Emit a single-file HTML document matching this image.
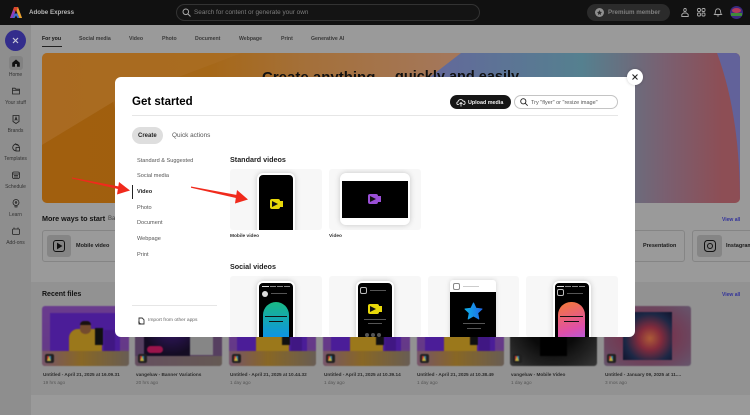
<!DOCTYPE html>
<html lang="en"><head><meta charset="utf-8"><title>Adobe Express</title>
<style>
*{box-sizing:border-box}
html,body{margin:0;padding:0;width:750px;height:415px;overflow:hidden;background:#9a9a9a}
body{font-family:"Liberation Sans",sans-serif;position:relative;color:#1a1a1a;filter:blur(.3px)}
.a{position:absolute}
.t{position:absolute;white-space:nowrap;line-height:1}
svg{position:absolute;overflow:visible}
.nav{font-size:5.2px;font-weight:bold;color:#3a3a3a;top:36.5px}
.side{font-size:5px;color:#333;width:31px;left:0;text-align:center}
.menu{font-size:5.6px;color:#555;left:22px}
.thumb{position:absolute;top:306px;width:87px;height:60px;border-radius:3px;overflow:hidden;background:linear-gradient(180deg,#6f3f95 0,#6a3c8f 70%,#6f5a5a 100%);filter:blur(.5px) brightness(.95)}
.thumb i{position:absolute;display:block}
.badge{position:absolute;left:3px;bottom:3px;width:9px;height:9px;background:#222;border-radius:2px}
.badge:after{content:"";position:absolute;left:2px;top:2px;border-left:2.5px solid #c33;border-right:2.5px solid #38b;border-bottom:5px solid #cb4}
.ft{font-size:4.7px;font-weight:bold;color:#2c2c2c;top:372.5px}
.fd{font-size:4.7px;color:#555;top:381px}
.card{position:absolute;height:61px;background:#f7f7f7;border-radius:3px;overflow:hidden}
.sc{position:absolute;background:#000;border:2px solid #fff;border-radius:6px;box-shadow:0 0 6px rgba(0,0,0,.2)}
.ln{position:absolute;background:#555;height:1px}
.bar{position:absolute;top:9.500px;height:.8px;background:#888}
</style></head><body>

<!-- top bar -->
<div class="a" style="left:0;top:0;width:750px;height:25px;background:#111"></div>
<svg style="left:10px;top:7px" width="12" height="11" viewBox="0 0 12 11"><path d="M4 0H8L12 11H9.400L6 3 2.600 11H0Z" fill="#d8452f"/><path d="M0 11L3.500 2.500 5 5 2.600 11Z" fill="#8a3fc0"/><path d="M2.600 11L4.500 6.500H7.500L9.400 11H7.500L6 8.500 4.500 11Z" fill="#3f6fd0"/><path d="M8 0L12 11H9.400L6.500 4Z" fill="#e7a52e"/></svg>
<div class="t" style="left:29px;top:10px;font-size:6.200px;font-weight:bold;color:#b5b5b5">Adobe Express</div>
<div class="a" style="left:176px;top:4px;width:304px;height:17px;border:1px solid #333;border-radius:9px;background:#141414"></div>
<svg style="left:182px;top:8px" width="9" height="9" viewBox="0 0 9 9" fill="none" stroke="#aaa" stroke-width="1"><circle cx="3.800" cy="3.800" r="2.800"/><path d="M6 6L8.500 8.500"/></svg>
<div class="t" style="left:194px;top:10px;font-size:6.400px;color:#7d7d7d">Search for content or generate your own</div>
<div class="a" style="left:587px;top:4px;width:83px;height:17px;border-radius:9px;background:#2b2b2b"></div>
<div class="a" style="left:595px;top:8px;width:9px;height:9px;border-radius:50%;background:#8f8f8f"></div>
<svg style="left:597px;top:10px" width="5" height="5" viewBox="0 0 10 10"><path d="M5 0L6.500 3.500 10 4 7.500 6.500 8 10 5 8 2 10 2.500 6.500 0 4 3.500 3.500Z" fill="#2b2b2b"/></svg>
<div class="t" style="left:608px;top:10px;font-size:6.200px;font-weight:bold;color:#7f7f7f">Premium member</div>
<svg style="left:681px;top:8px" width="8" height="9" viewBox="0 0 8 9" fill="none" stroke="#aaa" stroke-width=".9"><rect x="2.800" y=".5" width="2.400" height="3" rx="1"/><path d="M.8 8.500V6.500L2.500 5H5.500L7.200 6.500V8.500Z"/></svg>
<svg style="left:697px;top:8px" width="9" height="9" viewBox="0 0 9 9" fill="none" stroke="#aaa" stroke-width=".9"><rect x=".5" y=".5" width="3" height="3" rx="1"/><rect x="5" y=".5" width="3" height="3" rx="1"/><rect x=".5" y="5" width="3" height="3" rx="1"/><rect x="5" y="5" width="3" height="3" rx="1"/></svg>
<svg style="left:714px;top:8px" width="8" height="9" viewBox="0 0 8 9" fill="none" stroke="#aaa" stroke-width=".9"><path d="M.5 6.500C1.500 5.500 1.300 4 1.500 3 1.800 1.500 2.800.8 4 .8S6.200 1.500 6.500 3C6.700 4 6.500 5.500 7.500 6.500ZM3 7.500C3.300 8.300 4.700 8.300 5 7.500"/></svg>
<div class="a" style="left:730px;top:6px;width:13px;height:13px;border-radius:50%;background:#3a2a80;overflow:hidden"><div class="a" style="left:2px;top:2px;width:9px;height:5px;border-radius:50%;background:#b33a5a"></div><div class="a" style="left:1px;top:7px;width:11px;height:3px;background:#3f8a3a"></div></div>

<!-- main -->
<div class="a" style="left:0;top:25px;width:31px;height:390px;background:#8e8e8e"></div>
<div class="a" style="left:31px;top:282px;width:719px;height:113px;background:#929292"></div>

<div class="a" style="left:5px;top:30px;width:21px;height:21px;border-radius:50%;background:#332d8c"></div>
<svg style="left:12px;top:37px" width="7" height="7" viewBox="0 0 7 7" stroke="#c9c9d8" stroke-width="1.200"><path d="M1 1L6 6M6 1L1 6"/></svg>

<div class="a" style="left:9px;top:56px;width:14px;height:14px;border-radius:3px;background:#828282"></div>
<svg style="left:12px;top:59px" width="8" height="8" viewBox="0 0 8 8"><path d="M4 .5L7.800 3.800V7.800H5V5H3V7.800H.2V3.800Z" fill="#111"/></svg>
<div class="t side" style="top:73px">Home</div>
<svg style="left:12px;top:87px" width="8" height="8" viewBox="0 0 8 8" fill="none" stroke="#222" stroke-width=".8"><path d="M.5 7V1.200H3L3.800 2.200H7.500V7Z"/><path d="M.5 3.300H7.500"/></svg>
<div class="t side" style="top:101px">Your stuff</div>
<svg style="left:12px;top:115px" width="8" height="9" viewBox="0 0 8 9" fill="none" stroke="#222" stroke-width=".8"><path d="M1 .5H7V6.500L4 8.500 1 6.500Z"/><path d="M2.800 5.500L4 2.200 5.200 5.500M3.200 4.300H4.800"/></svg>
<div class="t side" style="top:129px">Brands</div>
<svg style="left:12px;top:143px" width="8" height="9" viewBox="0 0 8 9" fill="none" stroke="#222" stroke-width=".8"><circle cx="4" cy="4.500" r="3.300"/><rect x="4" y="4.500" width="3.500" height="3.500" fill="#8e8e8e"/><path d="M3 .5L5.500 2.500"/></svg>
<div class="t side" style="top:157px">Templates</div>
<svg style="left:12px;top:171px" width="8" height="8" viewBox="0 0 8 8" fill="none" stroke="#222" stroke-width=".8"><rect x=".5" y="1" width="7" height="6.500" rx="1.500"/><path d="M.5 3H7.500M2 4.500H6M2 6H6"/></svg>
<div class="t side" style="top:185px">Schedule</div>
<svg style="left:12px;top:199px" width="8" height="9" viewBox="0 0 8 9" fill="none" stroke="#222" stroke-width=".8"><circle cx="4" cy="3.500" r="3"/><circle cx="4" cy="3.500" r=".8"/><path d="M3 6.500V8H5V6.500"/></svg>
<div class="t side" style="top:213px">Learn</div>
<svg style="left:12px;top:227px" width="8" height="8" viewBox="0 0 8 8" fill="none" stroke="#222" stroke-width=".8"><rect x=".5" y="2" width="7" height="5.500" rx="1"/><path d="M2 .5V2M6 .5V2"/></svg>
<div class="t side" style="top:241px">Add-ons</div>

<div class="t nav" style="left:42px;color:#111">For you</div>
<div class="a" style="left:42px;top:46px;width:20px;height:1px;background:#222"></div>
<div class="t nav" style="left:79px">Social media</div>
<div class="t nav" style="left:129px">Video</div>
<div class="t nav" style="left:162px">Photo</div>
<div class="t nav" style="left:195px">Document</div>
<div class="t nav" style="left:239px">Webpage</div>
<div class="t nav" style="left:281px">Print</div>
<div class="t nav" style="left:311px">Generative AI</div>

<!-- banner -->
<div class="a" style="left:42px;top:53px;width:698px;height:150px;border-radius:5px;overflow:hidden;background:linear-gradient(90deg,#a7651a 0,#a66818 24%,#a4703a 38%,#a4775a 58%)">
<svg style="left:0;top:0" width="698" height="150" viewBox="0 0 698 150"><defs><linearGradient id="g" gradientUnits="userSpaceOnUse" x1="400" y1="0" x2="680" y2="0"><stop offset="0" stop-color="#626a9a"/><stop offset=".5" stop-color="#55808f"/><stop offset=".8" stop-color="#7a5f70"/><stop offset="1" stop-color="#8d4e55"/></linearGradient></defs><path d="M0 92L71 49 200 0H0Z" fill="#ab6f28" opacity=".5"/><path d="M0 92L71 49 100 150H0Z" fill="#9e5c0a" opacity=".7"/><path d="M225 150L419 0H698V150Z" fill="url(#g)"/><path d="M675 0H698V150C698 90 690 40 675 0Z" fill="#62629a"/></svg>
</div>
<div class="t" style="left:262px;top:70px;font-size:15px;font-weight:bold;color:#111">Create anything</div>
<div class="t" style="left:395px;top:70px;font-size:14.500px;font-weight:bold;color:#111">quickly and easily</div>

<div class="t" style="left:42px;top:215px;font-size:7.200px;font-weight:bold;color:#111">More ways to start</div>
<div class="t" style="left:108px;top:216px;font-size:6px;color:#444">Ba</div>
<div class="t" style="left:722px;top:218px;font-size:5px;font-weight:bold;color:#33339a">View all</div>

<div class="a" style="left:42px;top:230px;width:90px;height:32px;border:1px solid #858585;border-radius:3px"></div>
<div class="a" style="left:47px;top:235px;width:24px;height:22px;border-radius:3px;background:#858585"></div>
<svg style="left:53px;top:240px" width="12" height="12" viewBox="0 0 12 12" fill="none" stroke="#111" stroke-width="1"><rect x=".5" y=".5" width="11" height="11" rx="2.500"/><path d="M4.500 3.500L8.500 6 4.500 8.500Z" fill="#111"/></svg>
<div class="t" style="left:76px;top:244px;font-size:5.500px;font-weight:bold;color:#1a1a1a">Mobile video</div>

<div class="a" style="left:600px;top:230px;width:85px;height:32px;border:1px solid #858585;border-radius:3px"></div>
<div class="t" style="left:643px;top:244px;font-size:5.500px;font-weight:bold;color:#1a1a1a">Presentation</div>
<div class="a" style="left:692px;top:230px;width:70px;height:32px;border:1px solid #858585;border-radius:3px"></div>
<div class="a" style="left:697px;top:235px;width:25px;height:22px;border-radius:3px;background:#858585"></div>
<svg style="left:704px;top:240px" width="12" height="12" viewBox="0 0 12 12" fill="none" stroke="#111" stroke-width="1"><rect x=".5" y=".5" width="11" height="11" rx="3"/><circle cx="6" cy="6" r="2.500"/></svg>
<div class="t" style="left:726px;top:244px;font-size:5.500px;font-weight:bold;color:#1a1a1a">Instagram</div>

<div class="t" style="left:42px;top:291px;font-size:7px;font-weight:bold;color:#111">Recent files</div>
<div class="t" style="left:722px;top:293px;font-size:5px;font-weight:bold;color:#33339a">View all</div>

<div class="thumb" style="left:42px"><i style="left:8px;top:7px;width:70px;height:38px;background:#4f1fa0"></i><i style="left:27px;top:23px;width:33px;height:22px;border-radius:9px 9px 0 0;background:#a37e1c"></i><i style="left:38px;top:16px;width:11px;height:12px;border-radius:5px;background:#7a4f30"></i><i style="left:38px;top:15px;width:11px;height:4px;border-radius:4px 4px 0 0;background:#1a1210"></i><i style="left:53px;top:22px;width:8px;height:17px;background:#111"></i><i style="left:62px;top:24px;width:11px;height:21px;background:#43188a"></i><i style="left:0;top:45px;width:87px;height:15px;background:linear-gradient(90deg,#7d5a70,#8f6c26 45%,#6e6258)"></i><span class="badge"></span></div>
<div class="thumb" style="left:135px;background:#5a4265"><i style="left:9px;top:0;width:46px;height:50px;background:radial-gradient(circle at 60% 40%,#3a1a70,#150d25 70%)"></i><i style="left:12px;top:40px;width:16px;height:7px;border-radius:4px;background:#a3154f"></i><i style="left:55px;top:0;width:23px;height:49px;background:#8d8d8d"></i><i style="left:0;top:50px;width:87px;height:10px;background:linear-gradient(90deg,#6a5365,#6a5f58)"></i><span class="badge"></span></div>
<div class="thumb" style="left:229px"><i style="left:8px;top:7px;width:70px;height:38px;background:#4f1fa0"></i><i style="left:27px;top:23px;width:33px;height:22px;border-radius:9px 9px 0 0;background:#a37e1c"></i><i style="left:53px;top:22px;width:8px;height:17px;background:#111"></i><i style="left:62px;top:24px;width:11px;height:21px;background:#43188a"></i><i style="left:0;top:45px;width:87px;height:15px;background:linear-gradient(90deg,#7d5a70,#8f6c26 45%,#6e6258)"></i><span class="badge"></span></div>
<div class="thumb" style="left:323px"><i style="left:8px;top:7px;width:70px;height:38px;background:#4f1fa0"></i><i style="left:27px;top:23px;width:33px;height:22px;border-radius:9px 9px 0 0;background:#a37e1c"></i><i style="left:53px;top:22px;width:8px;height:17px;background:#111"></i><i style="left:62px;top:24px;width:11px;height:21px;background:#43188a"></i><i style="left:0;top:45px;width:87px;height:15px;background:linear-gradient(90deg,#7d5a70,#8f6c26 45%,#6e6258)"></i><span class="badge"></span></div>
<div class="thumb" style="left:417px"><i style="left:8px;top:7px;width:70px;height:38px;background:#4f1fa0"></i><i style="left:27px;top:23px;width:33px;height:22px;border-radius:9px 9px 0 0;background:#a37e1c"></i><i style="left:53px;top:22px;width:8px;height:17px;background:#111"></i><i style="left:62px;top:24px;width:11px;height:21px;background:#43188a"></i><i style="left:0;top:45px;width:87px;height:15px;background:linear-gradient(90deg,#7d5a70,#8f6c26 45%,#6e6258)"></i><span class="badge"></span></div>
<div class="thumb" style="left:510px;background:radial-gradient(ellipse at 50% 30%,#0a0a0a 40%,#3a3a3a 100%)"><i style="left:30px;top:25px;width:27px;height:25px;background:#000"></i><span class="badge"></span></div>
<div class="thumb" style="left:604px;background:radial-gradient(ellipse at 50% 50%,#7a3a55 40%,#6a5a72 100%)"><i style="left:19px;top:6px;width:49px;height:48px;background:radial-gradient(circle at 55% 55%,#b5603a 0,#8a2d3f 30%,#1d2a4a 65%,#0d0d25 100%)"></i><span class="badge"></span></div>

<div class="t ft" style="left:43px">Untitled - April 21, 2025 at 16.09.31</div><div class="t fd" style="left:43px">19 hrs ago</div>
<div class="t ft" style="left:136px">vangeluw - Banner Variations</div><div class="t fd" style="left:136px">20 hrs ago</div>
<div class="t ft" style="left:230px">Untitled - April 21, 2025 at 10.44.32</div><div class="t fd" style="left:230px">1 day ago</div>
<div class="t ft" style="left:324px">Untitled - April 21, 2025 at 10.39.14</div><div class="t fd" style="left:324px">1 day ago</div>
<div class="t ft" style="left:417px">Untitled - April 21, 2025 at 10.38.49</div><div class="t fd" style="left:417px">1 day ago</div>
<div class="t ft" style="left:511px">vangeluw - Mobile Video</div><div class="t fd" style="left:511px">1 day ago</div>
<div class="t ft" style="left:605px">Untitled - January 09, 2025 at 11....</div><div class="t fd" style="left:605px">3 mos ago</div>

<!-- modal -->
<div class="a" style="left:115px;top:77px;width:520px;height:260px;background:#fff;border-radius:6px;overflow:hidden">
<div class="t" style="left:17px;top:20px;font-size:11.500px;font-weight:bold;color:#000">Get started</div>
<div class="a" style="left:17px;top:38px;width:486px;height:1px;background:#e6e6e6"></div>
<div class="a" style="left:335px;top:18px;width:61px;height:14px;border-radius:7px;background:#161616"></div>
<svg style="left:341px;top:21px" width="10" height="9" viewBox="0 0 10 9" fill="none" stroke="#e8e8e8" stroke-width=".9"><path d="M2.800 6.500H2C.5 6.500.3 4 2 3.800 2.300 1.500 6 .5 7 3 9.500 3 9.800 6.300 7.800 6.500H7.200"/><path d="M5 8.500V4.500M3.500 6L5 4.500 6.500 6"/></svg>
<div class="t" style="left:353px;top:23.500px;font-size:5.400px;font-weight:bold;color:#eee">Upload media</div>
<div class="a" style="left:399px;top:18px;width:104px;height:14px;border-radius:7px;border:1px solid #c4c4c4"></div>
<svg style="left:405px;top:21px" width="8" height="8" viewBox="0 0 8 8" fill="none" stroke="#222" stroke-width=".9"><circle cx="3.300" cy="3.300" r="2.600"/><path d="M5.300 5.300L7.700 7.700"/></svg>
<div class="t" style="left:416px;top:23.500px;font-size:5.500px;color:#555">Try "flyer" or "resize image"</div>

<div class="a" style="left:17px;top:50px;width:31px;height:17px;border-radius:9px;background:#dedede"></div>
<div class="t" style="left:23px;top:56px;font-size:6px;font-weight:bold;color:#222">Create</div>
<div class="t" style="left:57px;top:56px;font-size:6.400px;color:#555">Quick actions</div>

<div class="a" style="left:17px;top:108px;width:1px;height:14px;background:#222"></div>
<div class="t menu" style="top:81.500px">Standard &amp; Suggested</div>
<div class="t menu" style="top:97px">Social media</div>
<div class="t menu" style="top:113px;font-weight:bold;color:#222">Video</div>
<div class="t menu" style="top:128.500px">Photo</div>
<div class="t menu" style="top:144px">Document</div>
<div class="t menu" style="top:160px">Webpage</div>
<div class="t menu" style="top:175.500px">Print</div>
<div class="a" style="left:17px;top:228px;width:85px;height:1px;background:#e6e6e6"></div>
<svg style="left:23px;top:240px" width="7" height="8" viewBox="0 0 7 8" fill="none" stroke="#333" stroke-width=".9"><path d="M1 1H4.200L6 2.800V7H1Z"/><path d="M1 4.500A2 2 0 0 0 3 7" stroke-width="1.300"/></svg>
<div class="t" style="left:33px;top:242px;font-size:4.900px;color:#666">Import from other apps</div>

<div class="t" style="left:115px;top:79px;font-size:7.200px;font-weight:bold;color:#222">Standard videos</div>
<div class="t" style="left:115px;top:157.500px;font-size:4.800px;font-weight:bold;color:#333">Mobile video</div>
<div class="t" style="left:214px;top:157.500px;font-size:4.800px;font-weight:bold;color:#333">Video</div>
<div class="t" style="left:115px;top:186px;font-size:7.200px;font-weight:bold;color:#222">Social videos</div>

<!-- standard -->
<div class="card" style="left:115px;top:92px;width:92px">
 <div class="sc" style="left:27px;top:4px;width:38px;height:64px"></div>
 <div class="a" style="left:34px;top:4px;width:24px;height:2px;background:#fff;border-radius:0 0 3px 3px"></div>
 <div class="a" style="left:40px;top:30px;width:10px;height:10px;background:#e8d80a;border-radius:2px"></div>
 <svg style="left:42px;top:32px" width="6" height="6" viewBox="0 0 6 6"><path d="M0 0L6 3 0 6Z" fill="#111"/></svg>
 <div class="a" style="left:50px;top:32px;width:3px;height:6px;background:#e8d80a"></div>
</div>
<div class="card" style="left:214px;top:92px;width:92px">
 <div class="sc" style="left:11px;top:4px;width:70px;height:52px;border-width:8px 2px 7px"></div>
 <div class="a" style="left:39px;top:25px;width:10px;height:10px;background:#9a4fd6;border-radius:2px"></div>
 <svg style="left:41px;top:27px" width="6" height="6" viewBox="0 0 6 6"><path d="M0 0L6 3 0 6Z" fill="#111"/></svg>
 <div class="a" style="left:49px;top:27px;width:3px;height:6px;background:#9a4fd6"></div>
</div>

<!-- social -->
<div class="card" style="left:115px;top:199px;width:92px">
 <div class="sc" style="left:27px;top:5px;width:38px;height:64px"></div>
 <div class="bar" style="left:32px;width:7px;background:#ddd"></div><div class="bar" style="left:40px;width:6px"></div><div class="bar" style="left:47px;width:6px"></div><div class="bar" style="left:54px;width:6px"></div>
 <div class="a" style="left:32px;top:15px;width:6px;height:6px;border-radius:50%;background:#ddd"></div>
 <div class="ln" style="left:41px;top:17px;width:16px"></div>
 <div class="a" style="left:33px;top:26px;width:26px;height:40px;border-radius:13px 13px 0 0;background:linear-gradient(180deg,#19b984,#0c8ff0)"></div>
 <div class="ln" style="left:35px;top:40px;width:22px;background:#111"></div>
 <div class="ln" style="left:39px;top:44.500px;width:14px;background:#111"></div>
</div>
<div class="card" style="left:214px;top:199px;width:92px">
 <div class="sc" style="left:27px;top:5px;width:38px;height:64px"></div>
 <div class="a" style="left:31px;top:11px;width:7px;height:7px;border:1px solid #bbb;border-radius:2px"></div>
 <div class="ln" style="left:41px;top:14px;width:16px"></div>
 <div class="a" style="left:39px;top:28px;width:11px;height:10px;background:#e8d80a;border-radius:2px"></div>
 <svg style="left:41px;top:30px" width="6" height="6" viewBox="0 0 6 6"><path d="M0 0L6 3 0 6Z" fill="#111"/></svg>
 <div class="a" style="left:50px;top:30px;width:3px;height:6px;background:#e8d80a"></div>
 <div class="ln" style="left:35px;top:43px;width:22px"></div>
 <div class="ln" style="left:39px;top:47px;width:14px"></div>
 <div class="a" style="left:36px;top:57px;width:4px;height:4px;border-radius:50%;background:#555"></div><div class="a" style="left:42px;top:57px;width:4px;height:4px;border-radius:50%;background:#555"></div><div class="a" style="left:48px;top:57px;width:4px;height:4px;border-radius:50%;background:#555"></div>
</div>
<div class="card" style="left:313px;top:199px;width:91px">
 <div class="a" style="left:22px;top:4px;width:46px;height:62px;background:#fff;border-radius:3px;box-shadow:0 0 5px rgba(0,0,0,.15)"></div>
 <div class="a" style="left:22px;top:16px;width:46px;height:45px;background:#000"></div>
 <div class="a" style="left:25px;top:7px;width:7px;height:7px;border:1px solid #888;border-radius:2px"></div>
 <div class="ln" style="left:35px;top:10px;width:16px;background:#ccc"></div>
 <svg style="left:37px;top:27px" width="17" height="16" viewBox="0 0 17 16"><defs><linearGradient id="s" x1="0" x2="1"><stop offset="0" stop-color="#10b0e8"/><stop offset="1" stop-color="#1f6ae8"/></linearGradient></defs><path d="M8.500 0L11 5.200 17 6 12.700 10 13.800 16 8.500 13 3.200 16 4.300 10 0 6 6 5.200Z" fill="url(#s)" stroke="url(#s)" stroke-width="1" stroke-linejoin="round"/></svg>
 <div class="ln" style="left:35px;top:47px;width:22px"></div>
 <div class="ln" style="left:39px;top:52px;width:14px"></div>
</div>
<div class="card" style="left:411px;top:199px;width:92px">
 <div class="sc" style="left:27px;top:5px;width:38px;height:64px"></div>
 <div class="bar" style="left:31px;width:7px;background:#ddd"></div><div class="bar" style="left:39px;width:6px"></div><div class="bar" style="left:46px;width:6px"></div><div class="bar" style="left:53px;width:6px"></div>
 <div class="a" style="left:31px;top:13px;width:7px;height:7px;border:1px solid #bbb;border-radius:2px"></div>
 <div class="ln" style="left:41px;top:17px;width:16px"></div>
 <div class="a" style="left:32px;top:26px;width:27px;height:40px;border-radius:13px 13px 0 0;background:linear-gradient(160deg,#f57b33,#e04fa8 65%,#a85fe8)"></div>
 <div class="ln" style="left:34px;top:40px;width:23px;background:#111"></div>
 <div class="ln" style="left:38px;top:44.500px;width:15px;background:#111"></div>
</div>
</div>

<!-- close -->
<div class="a" style="left:627px;top:69px;width:16px;height:16px;border-radius:50%;background:#fff;box-shadow:0 0 3px rgba(0,0,0,.2)"></div>
<svg style="left:632px;top:74px" width="6" height="6" viewBox="0 0 6 6" stroke="#222" stroke-width="1.100"><path d="M.5 .5L5.500 5.500M5.500 .5L.5 5.500"/></svg>

<!-- arrows -->
<svg style="left:0;top:0" width="750" height="415" viewBox="0 0 750 415"><path d="M72 177.500L119 186.500 118 189 72 178.500Z" fill="#f02a1c"/><path d="M119 182L130 190.500 117 194.500Z" fill="#f02a1c"/><path d="M191 186.500L237 195 236 198 191 187.800Z" fill="#f02a1c"/><path d="M237 190L248 199.500 235 203.500Z" fill="#f02a1c"/></svg>
</body></html>
